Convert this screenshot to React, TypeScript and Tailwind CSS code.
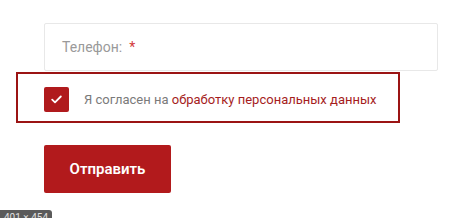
const App = () => {
  return (
    <div className="relative w-[460px] h-[218px] bg-white overflow-hidden" style={{ fontFamily: 'Roboto, "Liberation Sans", sans-serif' }}>
      <div className="pt-[23px] pl-[16px]">
        {/* Phone input */}
        <div className="ml-[28px] w-[394px] h-[48px] border border-[#e8e8e8] rounded-[2px] flex items-center pl-[17px]">
          <span className="text-[14px] text-[#9a9a9a]">Телефон:</span>
          <span className="ml-[7px] text-[14px] text-[#d23a3a]">*</span>
        </div>

        {/* Consent */}
        <div className="mt-[1px] w-[384px] h-[51px] border-2 border-[#9b1414] flex items-center pl-[26px] pt-[4px]">
          <div className="w-[25px] h-[25px] bg-[#b01a1d] rounded-[2px] flex items-center justify-center">
            <svg width="11" height="9" viewBox="0 0 11 9" fill="none">
              <path d="M1.2 4.6 L4 7.3 L9.8 1.5" stroke="white" strokeWidth="1.8" strokeLinecap="round" strokeLinejoin="round" />
            </svg>
          </div>
          <span className="ml-[15px] text-[13px] text-[#7a7a7a]">
            Я согласен на <span className="text-[#a51d1d]">обработку персональных данных</span>
          </span>
        </div>

        {/* Submit */}
        <button className="mt-[22px] ml-[28px] w-[127px] h-[48px] bg-[#b21a1c] rounded-[2px] text-white text-[15px] font-semibold">
          Отправить
        </button>
      </div>

      {/* Size badge */}
      <div className="absolute left-0 top-[210px] h-[16px] px-[4px] bg-[#5a5a5a] rounded-tr-[3px] text-[#e0e0e0] text-[10px] leading-[16px]">
        401 × 454
      </div>
    </div>
  );
};

export default App;
